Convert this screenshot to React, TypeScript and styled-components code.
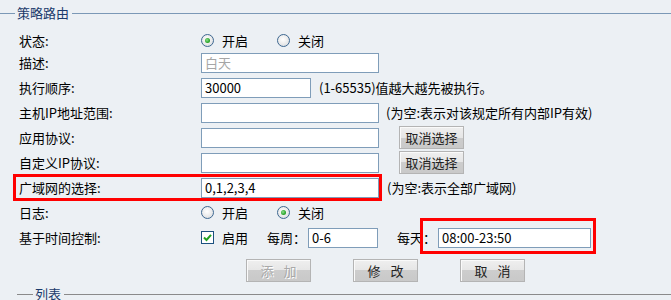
import React from "react";
import styled, { createGlobalStyle } from "styled-components";

const GlobalStyle = createGlobalStyle`
  html, body {
    margin: 0;
    background: #ecf0f4;
  }
  body {
    font-family: "Noto Sans CJK SC", "Liberation Sans", sans-serif;
    font-size: 13px;
    color: #000;
    overflow: hidden;
  }
`;

const Page = styled.div`
  width: 671px;
  height: 300px;
  overflow: hidden;
`;

const Legend = styled.div<{ $indent: number; $lead: number; $color: string }>`
  display: flex;
  align-items: center;
  height: 26px;
  margin-left: ${({ $indent }) => $indent}px;

  &::before,
  &::after {
    content: "";
    height: 1px;
    background: ${({ $color }) => $color};
  }
  &::before {
    width: ${({ $lead }) => $lead}px;
    margin-right: 2px;
  }
  &::after {
    flex: 1;
    margin-left: 3px;
  }
`;

const LegendText = styled.span`
  color: #1b3a6b;
  line-height: 14px;
`;

const Form = styled.div`
  margin-top: 4px;
`;

const Row = styled.div<{ $h?: number }>`
  display: flex;
  align-items: center;
  height: ${({ $h }) => $h ?? 25}px;
  padding-left: 19px;
`;

const Label = styled.span`
  width: 182px;
  flex-shrink: 0;
  white-space: nowrap;
`;

const Text = styled.span<{ $gap?: number }>`
  margin-left: ${({ $gap }) => $gap ?? 0}px;
  white-space: nowrap;
`;

const Field = styled.input<{ $w: number; $muted?: boolean; $gap?: number }>`
  box-sizing: border-box;
  width: ${({ $w }) => $w}px;
  height: 20px;
  margin: 0 0 0 ${({ $gap }) => $gap ?? 0}px;
  padding: 0 3px;
  border: 1px solid #7f9db9;
  background: #fff;
  font-family: inherit;
  font-size: 13px;
  color: ${({ $muted }) => ($muted ? "#a6a6a6" : "#000")};
  outline: none;
`;

const Highlight = styled.span<{ $pad: [number, number, number, number] }>`
  display: inline-flex;
  align-items: center;
  border: 3px solid #ff0000;
  padding: ${({ $pad }) => $pad.map((p) => `${p}px`).join(" ")};
  margin: ${({ $pad }) => $pad.map((p) => `${-(p + 3)}px`).join(" ")};
`;

const Button = styled.button<{ $spaced?: boolean; $gap?: number }>`
  box-sizing: border-box;
  width: 65px;
  height: 23px;
  margin: 0 0 0 ${({ $gap }) => $gap ?? 0}px;
  padding: 0;
  border: 1px solid #b4b4b4;
  box-shadow: inset 1px 1px 0 #fafafa;
  background: linear-gradient(#efefef 0, #e6e6e6 50%, #cdcdcd 50%, #c9c9c9 100%);
  font-family: inherit;
  font-size: 13px;
  color: #222;
  letter-spacing: ${({ $spaced }) => ($spaced ? "10px" : "0")};
  text-indent: ${({ $spaced }) => ($spaced ? "10px" : "0")};

  &:disabled {
    color: #a9a9a9;
    text-shadow: 1px 1px 0 #fff;
  }
`;

const ButtonBar = styled.div`
  display: flex;
  gap: 42px;
  margin-top: 9px;
  padding-left: 246px;
`;

const RadioGroup = styled.div`
  display: flex;
  align-items: center;
`;

const RadioItem = styled.label<{ $gap?: number }>`
  display: inline-flex;
  align-items: center;
  gap: 8px;
  margin-left: ${({ $gap }) => $gap ?? 0}px;
`;

const RadioRing = styled.span`
  box-sizing: border-box;
  display: inline-flex;
  align-items: center;
  justify-content: center;
  width: 13px;
  height: 13px;
  border-radius: 50%;
  border: 1px solid #3e6891;
  background: radial-gradient(circle at 45% 40%, #ffffff 0, #eeeeee 45%, #cfd4da 100%);
`;

const RadioDot = styled.span`
  width: 5px;
  height: 5px;
  border-radius: 50%;
  background: radial-gradient(circle at 40% 40%, #8ee08e 0, #2aa52a 60%, #1d8a1d 100%);
`;

const CheckBox = styled.span`
  box-sizing: border-box;
  display: inline-flex;
  align-items: center;
  justify-content: center;
  width: 13px;
  height: 13px;
  border: 1px solid #1c5180;
  background: #fff;
`;

const Radio = ({ label, checked, gap }: { label: string; checked?: boolean; gap?: number }) => (
  <RadioItem $gap={gap}>
    <RadioRing>{checked && <RadioDot />}</RadioRing>
    {label}
  </RadioItem>
);

const Check = () => (
  <CheckBox>
    <svg width="9" height="9" viewBox="0 0 9 9">
      <path d="M1 4.5 L3.5 7 L8 1.8" fill="none" stroke="#21a121" strokeWidth="2" />
    </svg>
  </CheckBox>
);

export default function App() {
  return (
    <Page>
      <GlobalStyle />
      <Legend $indent={0} $lead={15} $color="#7b98b6">
        <LegendText>策略路由</LegendText>
      </Legend>

      <Form>
        <Row $h={20}>
          <Label>状态:</Label>
          <RadioGroup>
            <Radio label="开启" checked />
            <Radio label="关闭" gap={29} />
          </RadioGroup>
        </Row>
        <Row>
          <Label>描述:</Label>
          <Field $w={178} $muted defaultValue="白天" readOnly />
        </Row>
        <Row>
          <Label>执行顺序:</Label>
          <Field $w={110} defaultValue="30000" />
          <Text $gap={8}>(1-65535)值越大越先被执行。</Text>
        </Row>
        <Row>
          <Label>主机IP地址范围:</Label>
          <Field $w={178} />
          <Text $gap={7}>(为空:表示对该规定所有内部IP有效)</Text>
        </Row>
        <Row>
          <Label>应用协议:</Label>
          <Field $w={178} />
          <Button $gap={20}>取消选择</Button>
        </Row>
        <Row>
          <Label>自定义IP协议:</Label>
          <Field $w={178} />
          <Button $gap={20}>取消选择</Button>
        </Row>
        <Row>
          <Highlight $pad={[1, 0, 0, 3]}>
            <Label>广域网的选择:</Label>
            <Field $w={178} defaultValue="0,1,2,3,4" />
          </Highlight>
          <Text $gap={8}>(为空:表示全部广域网)</Text>
        </Row>
        <Row>
          <Label>日志:</Label>
          <RadioGroup>
            <Radio label="开启" />
            <Radio label="关闭" checked gap={29} />
          </RadioGroup>
        </Row>
        <Row>
          <Label>基于时间控制:</Label>
          <RadioItem>
            <Check />
            启用
          </RadioItem>
          <Text $gap={19}>每周：</Text>
          <Field $w={70} $gap={2} defaultValue="0-6" />
          <Text $gap={19}>每天</Text>
          <Highlight $pad={[7, 2, 3, 0]}>
            <span>：</span>
            <Field $w={153} $gap={2} defaultValue="08:00-23:50" />
          </Highlight>
        </Row>
      </Form>

      <ButtonBar>
        <Button $spaced disabled>添加</Button>
        <Button $spaced>修改</Button>
        <Button $spaced>取消</Button>
      </ButtonBar>

      <Legend $indent={17} $lead={16} $color="#8a8a8a" style={{ height: 18, marginTop: 3 }}>
        <LegendText>列表</LegendText>
      </Legend>
    </Page>
  );
}
